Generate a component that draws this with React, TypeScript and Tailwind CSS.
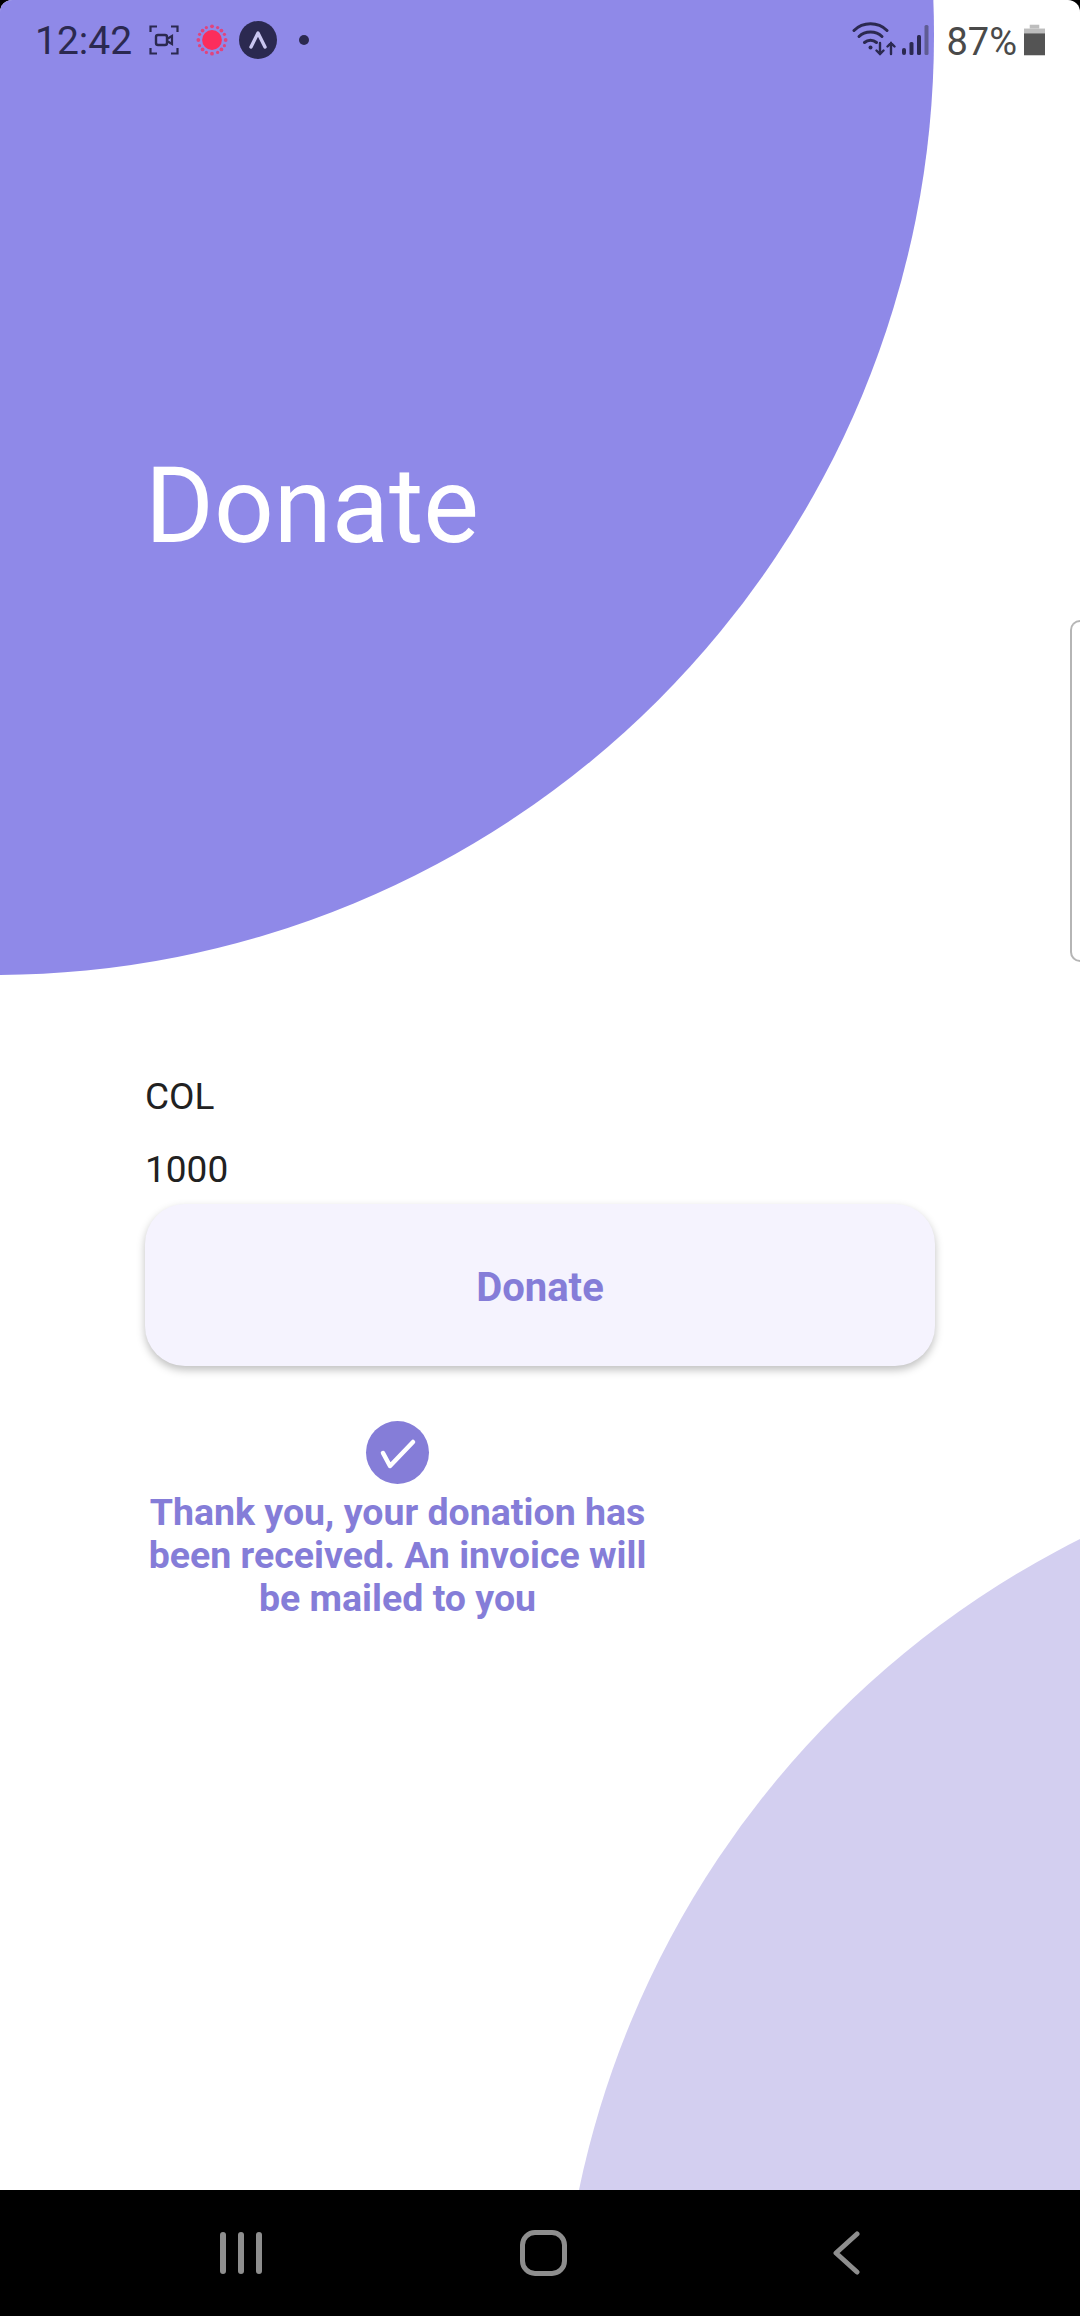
import React from "react";

function StatusLeft() {
  return (
    <div className="flex items-center">
      <span className="ml-[35px] mt-[3px] w-[96px] text-[39px] leading-none text-[#2b2950]">12:42</span>
      <svg className="ml-[18px]" width="30" height="30" viewBox="0 0 30 30" fill="none" stroke="#2b2950" strokeWidth="2.2">
        <path d="M1.500 7V1.500H8M22 1.500h6.500V7M28.500 23v5.500H22M8 28.500H1.500V23" />
        <rect x="7" y="10" width="11" height="10" rx="2" strokeWidth="2.400" />
        <path d="M18 14l5-3v8l-5-3" strokeWidth="2.200" />
      </svg>
      <svg className="ml-[17px]" width="32" height="32" viewBox="0 0 34 34">
        <circle cx="17" cy="17" r="10.500" fill="#fb2d5c" />
        <g fill="#e0447e">
          <circle cx="17" cy="2.500" r="2" /><circle cx="17" cy="31.500" r="2" />
          <circle cx="2.500" cy="17" r="2" /><circle cx="31.500" cy="17" r="2" />
          <circle cx="7" cy="7" r="2" /><circle cx="27" cy="7" r="2" />
          <circle cx="7" cy="27" r="2" /><circle cx="27" cy="27" r="2" />
          <circle cx="11" cy="3.800" r="1.700" /><circle cx="23" cy="3.800" r="1.700" />
          <circle cx="11" cy="30.200" r="1.700" /><circle cx="23" cy="30.200" r="1.700" />
          <circle cx="3.800" cy="11" r="1.700" /><circle cx="30.200" cy="11" r="1.700" />
          <circle cx="3.800" cy="23" r="1.700" /><circle cx="30.200" cy="23" r="1.700" />
        </g>
      </svg>
      <svg className="ml-[11px]" width="38" height="38" viewBox="0 0 38 38">
        <circle cx="19" cy="19" r="19" fill="#2b2950" />
        <path d="M12 26L19 12L26 26" fill="none" stroke="#c9c6f0" strokeWidth="3.400" strokeLinecap="round" strokeLinejoin="round" />
      </svg>
      <div className="ml-[22px] h-[10px] w-[10px] rounded-full bg-[#2b2950]" />
    </div>
  );
}

function StatusRight() {
  return (
    <div className="flex items-center">
      <svg width="44" height="36" viewBox="0 0 44 36" fill="none" stroke="#2b2950" strokeLinecap="round">
        <path d="M2 8.500C11 -0.500 26 -0.500 35 8.500" strokeWidth="3" />
        <path d="M7 14.500C13 8.500 24 8.500 30 14.500" strokeWidth="3" />
        <path d="M12.500 20.500C16 17.500 21 17.500 24.500 20.500" strokeWidth="3" />
        <circle cx="18.500" cy="25.500" r="2" fill="#2b2950" stroke="none" />
        <path d="M28 21v11M24.500 28.500l3.500 3.500 3.500-3.500M39 32V21M35.500 24.500l3.500-3.500 3.500 3.500" strokeWidth="2.400" />
      </svg>
      <svg className="ml-[6px]" width="28" height="32" viewBox="0 0 28 32" fill="#2b2950">
        <rect x="0" y="24" width="4" height="7" rx="2" />
        <rect x="7.500" y="18" width="4" height="13" rx="1.500" />
        <rect x="15" y="11" width="4" height="20" rx="1.500" />
        <rect x="22.500" y="1" width="4" height="30" rx="1.500" fill="#5f5c93" />
      </svg>
      <span className="ml-[16px] mt-[3px] text-[38px] leading-none text-[#4a4a4a]">87%</span>
      <svg className="ml-[7px]" width="21" height="32" viewBox="0 0 22 32">
        <rect x="6" y="0" width="10" height="4" fill="#bdbdbd" />
        <rect x="0" y="4" width="22" height="5" fill="#bdbdbd" />
        <rect x="0" y="9" width="22" height="23" fill="#545454" />
      </svg>
    </div>
  );
}

export default function App() {
  return (
    <div className="h-[2316px] w-[1080px] overflow-hidden bg-black font-['Roboto',sans-serif]">
      <div className="relative h-[2190px] overflow-hidden rounded-t-[12px] bg-white">
        {/* background circles */}
        <div className="absolute left-[-946px] top-[-905px] h-[1880px] w-[1880px] rounded-full bg-[#8f89e8]" />
        <div className="absolute left-[559px] top-[1439px] h-[1888px] w-[1888px] rounded-full bg-[#d3cff0]" />

        {/* edge panel handle */}
        <div className="absolute right-0 top-[620px] h-[342px] w-[10px] rounded-l-[10px] border-y-2 border-l-2 border-[#b5b5b5]" />

        <div className="relative flex flex-col">
          <div className="flex h-[80px] items-center justify-between pr-[35px]">
            <StatusLeft />
            <StatusRight />
          </div>

          <h1 className="ml-[145px] mt-[368px] text-[105px] leading-[118px] font-normal text-white">Donate</h1>

          <div className="ml-[145px] mt-[510px] flex w-[790px] flex-col">
            <p className="text-[37px] leading-[42px] text-[#212121]">COL</p>
            <p className="mt-[31px] text-[37px] leading-[42px] text-[#212121]">1000</p>
            <button className="mt-[13px] h-[162px] w-full rounded-[40px] bg-[#f5f3fe] pt-[6px] text-[40px] font-bold text-[#857dd8] shadow-[0_4px_8px_rgba(0,0,0,0.25)]">
              Donate
            </button>
            <div className="mt-[55px] flex w-[505px] flex-col items-center">
              <div className="h-[63px] w-[63px] rounded-full bg-[#857dd8]">
                <svg width="63" height="63" viewBox="0 0 63 63" fill="none" stroke="white" strokeWidth="4.500" strokeLinecap="round" strokeLinejoin="round">
                  <path d="M17 32l7 13L47 21" />
                </svg>
              </div>
              <p className="mt-[7px] text-center text-[37.500px] leading-[43px] font-bold text-[#857dd8]">
                Thank you, your donation has been received. An invoice will be mailed to you
              </p>
            </div>
          </div>
        </div>
      </div>

      {/* nav bar */}
      <div className="flex h-[126px] w-full items-center">
        <div className="ml-[220px] flex h-[42px] gap-[12px]">
          <div className="h-full w-[6px] rounded-full bg-[#8e8e8e]" />
          <div className="h-full w-[6px] rounded-full bg-[#8e8e8e]" />
          <div className="h-full w-[6px] rounded-full bg-[#8e8e8e]" />
        </div>
        <div className="ml-[258px] h-[46px] w-[47px] rounded-[15px] border-[5px] border-[#8e8e8e]" />
        <svg className="ml-[265px]" width="28" height="44" viewBox="0 0 28 44" fill="none" stroke="#8e8e8e" strokeWidth="5" strokeLinecap="round" strokeLinejoin="round">
          <path d="M25 3L4 22l21 19" />
        </svg>
      </div>
    </div>
  );
}
